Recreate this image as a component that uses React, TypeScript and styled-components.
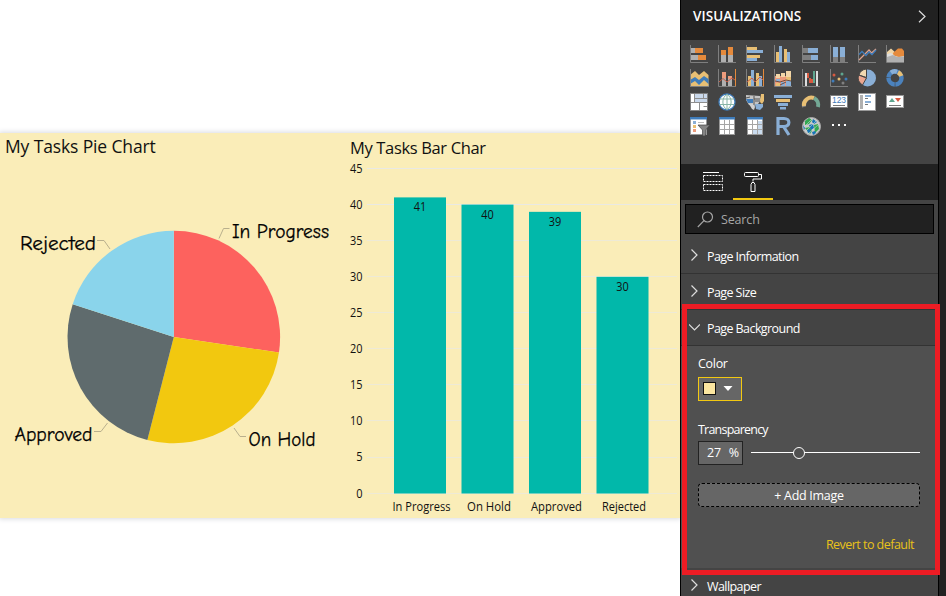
import React from "react";
import styled, { createGlobalStyle } from "styled-components";

const SANS = '"Open Sans", "Noto Sans", sans-serif';
const COMIC = '"Comic Sans MS", "Comic Neue", "Noto Sans", sans-serif';

const GlobalStyle = createGlobalStyle`
  *, *::before, *::after { box-sizing: border-box; }
  body { margin: 0; background: #fff; overflow: hidden; font-family: ${SANS}; }
  svg { display: block; }
`;

const Desktop = styled.div`
  display: flex;
  width: 946px;
  height: 596px;
  background: #212121;
`;

const Canvas = styled.main`
  width: 680px;
  flex: none;
  padding-top: 133px;
  background: #fff;
  overflow: hidden;
`;

const ReportPage = styled.section`
  display: grid;
  grid-template-columns: 345px 335px;
  height: 385px;
  background: #faedb8;
  box-shadow: 0 0 5px 1px #d9dbe0;
`;

const Visual = styled.article<{ $top: number }>`
  display: flex;
  flex-direction: column;
  padding-top: ${(p) => p.$top}px;
`;

const VisualTitle = styled.h2<{ $size: number; $spacing: number }>`
  margin: 0;
  padding-left: 5px;
  height: 27px;
  font-size: ${(p) => p.$size}px;
  line-height: 27px;
  font-weight: 400;
  letter-spacing: ${(p) => p.$spacing}px;
  color: #111;
  white-space: nowrap;
`;

const ComicLabel = styled.text`
  font-family: ${COMIC};
  font-size: 20px;
  fill: #000;
  stroke: #000;
  stroke-width: 0.25px;
`;

const AxisLabel = styled.text`
  font-family: ${SANS};
  font-size: 12.3px;
  fill: #111;
`;

const Panel = styled.aside`
  position: relative;
  display: flex;
  flex-direction: column;
  width: 259px;
  flex: none;
  border: solid #000;
  border-width: 0 1px;
  background: #444;
  color: #fff;
`;

const PanelHeader = styled.header`
  display: flex;
  align-items: center;
  justify-content: space-between;
  flex: none;
  height: 40px;
  padding: 0 12px 8px 12px;
  background: #212121;
`;

const PanelTitle = styled.h1`
  margin: 0;
  font-size: 13.5px;
  font-weight: 600;
  letter-spacing: 0.06px;
`;

const Gallery = styled.div`
  display: grid;
  grid-template-columns: repeat(8, 18px);
  grid-auto-rows: 18px;
  gap: 6px 10px;
  flex: none;
  height: 124px;
  padding: 5px 0 0 9px;
`;

const Tabs = styled.nav`
  display: flex;
  flex: none;
  height: 36px;
  padding-left: 12px;
  background: #212121;
`;

const Tab = styled.button<{ $active?: boolean }>`
  display: flex;
  align-items: flex-start;
  width: 40px;
  height: 36px;
  padding: 7px 0 0 10px;
  border: 0;
  border-bottom: 2px solid ${(p) => (p.$active ? "#f2c811" : "transparent")};
  background: none;
`;

const SearchBox = styled.div`
  display: flex;
  align-items: center;
  gap: 7px;
  flex: none;
  height: 30px;
  margin: 4px;
  padding-left: 11px;
  border: 1px solid #000;
  background: #212121;
  color: #a6a6a6;
  font-size: 12.5px;
  letter-spacing: -0.15px;
`;

const Row = styled.div`
  display: flex;
  align-items: center;
  gap: 7px;
  flex: none;
  height: 36px;
  padding: 0 0 0 8px;
  border-bottom: 1px solid #333;
  font-size: 12.5px;
  font-weight: 500;
  letter-spacing: -0.58px;

  svg {
    margin-bottom: 2px;
  }

  span {
    padding-top: 2px;
  }
`;

const Section = styled.div`
  display: flex;
  flex-direction: column;
  flex: none;
  height: 222px;
  padding: 10px 18px 0 17px;
  background: #505050;
  font-size: 12.5px;
`;

const Label = styled.label<{ $spacing?: number }>`
  height: 16px;
  line-height: 16px;
  letter-spacing: ${(p) => p.$spacing ?? 0}px;
`;

const ColorButton = styled.button`
  display: flex;
  align-items: center;
  gap: 7px;
  flex: none;
  width: 44px;
  height: 24px;
  margin: 5px 0 21px;
  padding: 0 4px 1px;
  border: 1px solid #f2c811;
  background: #666;
`;

const Swatch = styled.span`
  width: 13px;
  height: 13px;
  border: 1px solid #111;
  background: #fbe6a0;
`;

const SliderRow = styled.div`
  display: flex;
  align-items: center;
  gap: 8px;
  height: 24px;
  margin: 3px 0 18px;
`;

const PercentBox = styled.div`
  display: flex;
  justify-content: space-between;
  align-items: center;
  width: 45px;
  height: 24px;
  padding: 0 3px 1px 8px;
  border: 1px solid #222;
  background: #666;
  letter-spacing: -0.2px;
`;

const Track = styled.div`
  display: flex;
  align-items: center;
  width: 169px;
  height: 12px;
  padding-left: 42px;
  background: linear-gradient(#fff, #fff) 0 5px / 100% 1px no-repeat;
`;

const Knob = styled.span`
  width: 12px;
  height: 12px;
  border: 1px solid #fff;
  border-radius: 50%;
  background: #505050;
`;

const AddImage = styled.button`
  height: 24px;
  padding: 1px 0 0;
  border: 1px dashed #000;
  border-radius: 4px;
  background: #666;
  color: #fff;
  font: 12.5px ${SANS};
  letter-spacing: -0.3px;
`;

const Revert = styled.a`
  align-self: flex-end;
  margin: 29px 6px 0 0;
  line-height: 18px;
  letter-spacing: -0.53px;
  color: #e8c21a;
`;

const Highlight = styled.div`
  position: absolute;
  left: 1px;
  top: 304px;
  width: 258px;
  height: 271px;
  border: 5px solid #ed1c24;
  pointer-events: none;
`;

const O = "#e58a3c";
const B = "#8aafd6";
const D = "#3f7cba";
const T = "#e8bf74";
const G = "#b0b0b0";
const K = "#7f7f7f";
const P = "#ec9b7c";
const CREAM = "#f2d6a8";

type Block = [number, number, number, number, string];

function Blocks({ items, axis = true }: { items: Block[]; axis?: boolean }) {
  return (
    <>
      {axis && <path d="M.5 0V17.500H18" fill="none" stroke={K} />}
      {items.map(([x, y, w, h, c], i) => (
        <rect key={i} x={x} y={y} width={w} height={h} fill={c} />
      ))}
    </>
  );
}

const gridIcon = (tinted: boolean) => (
  <>
    <rect x="1.500" y=".5" width="15" height="17" fill="#fff" stroke="#999" />
    {tinted && <path d="M11 4h5v13h-5zM6 13h10v4H6z" fill="#c9dbee" />}
    <path d="M1 0h16v2.500H1z" fill={D} />
    <path d="M2 7.500h14M2 12.500h14M6.500 3v14M11.500 3v14" stroke="#a5a5a5" fill="none" />
  </>
);

const VISUALS: React.ReactNode[] = [
  <Blocks items={[[1, 3, 4, 5, G], [5, 3, 8, 5, O], [1, 10, 7, 5, G], [8, 10, 8, 5, O]]} />,
  <Blocks items={[[3, 5, 5, 5, O], [3, 10, 5, 7, G], [10, 2, 5, 8, O], [10, 10, 5, 7, G]]} />,
  <Blocks items={[[1, 2, 10, 3, T], [1, 5, 16, 3, B], [1, 10, 13, 3, T], [1, 13, 10, 3, B]]} />,
  <Blocks items={[[2, 7, 3, 10, T], [5, 1, 3, 16, B], [10, 4, 3, 13, T], [13, 7, 3, 10, B]]} />,
  <Blocks items={[[1, 3, 5, 5, K], [6, 3, 10, 5, B], [1, 10, 8, 5, K], [9, 10, 7, 5, B]]} />,
  <Blocks items={[[3, 2, 5, 10, B], [3, 12, 5, 5, K], [10, 2, 5, 10, B], [10, 12, 5, 5, K]]} />,
  <>
    <Blocks items={[]} />
    <path d="M1 15L5.500 10.500 11 5 13.500 8 18 4" fill="none" stroke="#e0a48f" strokeWidth="1.300" />
    <path d="M1 9.500L4 6.500 8 10.500 11 7 14 9.500 18 5" fill="none" stroke={D} strokeWidth="1.300" />
  </>,
  <>
    <path d="M1 7L5 3.500 11 9V14H1z" fill="#f0d4a4" />
    <path d="M7 8L12 3.500H16L18 6V13H8z" fill={O} />
    <path d="M1 9L5 8 9 11 13 12 18 11V17H1z" fill="#ddd" />
    <path d="M1 12L7 10 11 12 18 11.500V17H1z" fill={G} />
    <Blocks items={[]} />
  </>,
  <>
    <path d="M0 6L5 2 9 6 14 2 18.500 6V17H0z" fill={T} />
    <path d="M0 11L5 8 9 11 14 7 18.500 10V17H0z" fill={D} />
    <path d="M0 15L5 12 9 16 14 11 18.500 15V18H0z" fill={T} />
    <path d="M0 17.500h19M.5 0v18" stroke={K} />
  </>,
  <>
    <Blocks items={[[4, 3, 4, 6, P], [4, 9, 4, 8, G], [10, 7, 4, 3, P], [10, 10, 4, 7, G], [17, 0, 1, 17, O]]} />
    <path d="M1 13L5 9.500 9 13 14 9 17 11" fill="none" stroke="#c95d46" />
  </>,
  <>
    <Blocks items={[[2, 7, 3, 10, T], [5, 1, 3, 16, B], [10, 4, 3, 13, T], [13, 7, 3, 10, B], [17, 0, 1, 17, O]]} />
    <path d="M1 13L6 9 9 13 14 8 17 11" fill="none" stroke="#c95d46" />
  </>,
  <>
    <Blocks items={[[1, 7, 11, 4, P], [1, 11, 16, 6, P], [2, 5, 4, 4, CREAM], [7, 4, 4, 4, CREAM], [12, 2, 5, 6, CREAM], [2, 10, 4, 3, B], [7, 8, 4, 4, P], [12, 8, 5, 4, T], [2, 14, 4, 3, T], [7, 13, 4, 4, B], [12, 12, 5, 5, B]]} />
    <path d="M1 12l5 1 6-2 5 1M6 16l6-3" stroke="#6d4b43" fill="none" />
  </>,
  <Blocks items={[[3, 4, 2, 13, "#ddd"], [5, 4, 2, 5, "#d95a40"], [7, 9, 2, 5, "#d95a40"], [9, 10, 2, 4, "#d95a40"], [11, 2, 2, 12, "#5ea58e"], [14, 2, 2, 15, "#ddd"]]} />,
  <>
    <Blocks items={[]} />
    {[[4, 6, "#d95a40"], [12, 5, "#5ea58e"], [3, 12, D], [9, 10, T], [16, 10, D], [13, 14, K]].map(([x, y, c], i) => (
      <circle key={i} cx={x as number} cy={y as number} r="1.500" fill={c as string} />
    ))}
  </>,
  <>
    <circle cx="9.500" cy="9" r="8.500" fill={B} />
    <path d="M8.500 8.500V0A8.500 8.500 0 0 0 1 6z" fill="#f2d9b1" stroke="#444" />
    <path d="M8.500 9L.5 6A9 9 0 0 0 4.500 16z" fill="#eba68f" stroke="#444" />
  </>,
  <g fill="none" strokeWidth="4.500">
    <circle cx="9" cy="9" r="6.500" stroke="#4b82bd" strokeDasharray="9.600 .6" />
    <path d="M5 3.600A6.500 6.500 0 0 1 11 2.800" stroke={B} />
    <path d="M12 3.200A6.500 6.500 0 0 1 15.200 7" stroke={T} />
  </g>,
  <>
    <rect x=".5" y=".5" width="17" height="17" fill="#fff" stroke={K} />
    <path d="M5 1h12v9H5z" fill="#c9d8eb" />
    <path d="M4.500 1v8M1 9.500h16M9.500 10v7M5 5.500h12M13.500 1v4M13.500 13.500h3.500" fill="none" stroke="#8e8e8e" />
  </>,
  <>
    <circle cx="9" cy="9" r="8" fill="#fff" stroke={D} strokeWidth="1.300" />
    <path d="M2 6h14M1.500 11.500h15M9 1.500v15M9 1.500C3.500 4 3.500 14 9 16.500M9 1.500c5.500 2.500 5.500 12.500 0 15" fill="none" stroke="#87b4a6" />
  </>,
  <>
    <path d="M0 2l14 1 1 4-3 4-5 2-4-1-3-5z" fill="#c4c4c4" />
    <path d="M0 6h7v4H2z" fill={D} />
    <path d="M15 1h3v7l-2 3-2-2z" fill={T} />
    <path d="M3 11h5l1 3-1 3-2-1z" fill="#d0d0d0" />
    <path d="M9 11h8v3l-3 3-4-1z" fill={B} />
    <path d="M8 3v3h6M8 6v6M0 5l4-1M14 8H9" stroke="#555" fill="none" />
  </>,
  <Blocks axis={false} items={[[0, 2, 18, 3, B], [2, 6, 14, 3, T], [4, 10, 10, 3, B], [6, 14, 6, 2.500, B]]} />,
  <g fill="none" strokeWidth="4">
    <path d="M2 14A7.500 7.500 0 0 1 4 7" stroke={K} />
    <path d="M2 13A7.500 7.500 0 0 1 12 5" stroke={T} />
    <path d="M12 5A8 8 0 0 1 16 14" stroke="#73a895" />
  </g>,
  <>
    <rect x=".5" y="2.500" width="17" height="12" fill="#fff" stroke={K} />
    <text x="9" y="10" textAnchor="middle" fontSize="8.500" fontFamily="Liberation Sans" fill={D} textLength="14">123</text>
    <path d="M3 12.500h12" stroke="#777" />
  </>,
  <>
    <rect x=".5" y=".5" width="17" height="17" fill="#fff" stroke="#999" />
    <path d="M2 2h3v14H2z" fill={G} />
    <path d="M7 2h6v2H7zM7 8h6v2H7z" fill={B} />
    <path d="M7 5.500h3M7 11.500h3" stroke="#777" />
  </>,
  <>
    <rect x=".5" y="2.500" width="17" height="12" fill="#fff" stroke="#999" />
    <path d="M3 9l3-4 3 4z" fill="#5ea58e" />
    <path d="M9 5h6l-3 4z" fill="#d95a40" />
    <path d="M3 12.500h12" stroke="#777" />
  </>,
  <>
    <rect x=".5" y=".5" width="16" height="17" fill="#fff" stroke="#999" />
    <path d="M0 0h17v2.500H0z" fill={D} />
    <path d="M3 4h3v3H3z" fill={B} />
    <path d="M3 8h3v3H3z" fill={T} />
    <path d="M3 12h3v3H3z" fill={P} />
    <path d="M8 5.500h6" stroke="#bbb" />
    <path d="M8 8H20l-4.500 5v6h-3v-6z" fill="#858585" stroke="#444" strokeWidth=".7" />
  </>,
  gridIcon(false),
  gridIcon(true),
  <path d="M4 18V1.500H10C16.500 1.500 16.500 9.500 10 9.500H5M9.500 9.500L15 18" fill="none" stroke={B} strokeWidth="3.200" />,
  <>
    <circle cx="9.500" cy="9.500" r="9" fill="#c9c9c9" stroke="#aaa" />
    <path d="M3 4l4-3 3 2-3 4-4 1zM3 11l5-1 2 4-2 3zM12 8l4-1 1 5-4 4z" fill="#32a852" />
    <path d="M11 2l4 3-3 2-2-2zM7 8l4-1 1 4-3 2zM1 8l2 3-1 2zM10 15l3-1 1 2-3 2zM5 13l3-1 1 3-3 1z" fill="#1675b8" />
    <path d="M3 15L15 3M6 17L17 7M2 10L10 2" stroke="#c7d9d5" strokeWidth=".6" fill="none" />
  </>,
  <path d="M2 7h2v2H2zM8 7h2v2H8zM14 7h2v2h-2z" fill="#fff" />,
];

const TASKS = [
  { name: "In Progress", value: 41, color: "#fd625e" },
  { name: "On Hold", value: 40, color: "#f2c80f" },
  { name: "Approved", value: 39, color: "#5f6b6d" },
  { name: "Rejected", value: 30, color: "#8ad4eb" },
];

function PieChart() {
  const total = TASKS.reduce((s, t) => s + t.value, 0);
  const cx = 173.8, cy = 177, r = 106.3;
  let sum = 0;
  const at = (v: number) => {
    const a = (v / total) * Math.PI * 2;
    return `${cx + r * Math.sin(a)} ${cy - r * Math.cos(a)}`;
  };
  return (
    <svg width="345" height="358" viewBox="0 0 345 358">
      {TASKS.map((t) => {
        const start = sum;
        sum += t.value;
        return <path key={t.name} d={`M${cx} ${cy}L${at(start)}A${r} ${r} 0 0 1 ${at(sum)}z`} fill={t.color} />;
      })}
      <g fill="none" stroke="#b9b08d">
        <path d="M219 78.500l4.500-10h6M97 80.500h7l6 8.500M94 271.500h7l6.500-8.500M234 268l6 8.500h6" />
      </g>
      <ComicLabel x="232" y="78" textLength="97" lengthAdjust="spacingAndGlyphs">In Progress</ComicLabel>
      <ComicLabel x="20" y="90" textLength="76" lengthAdjust="spacingAndGlyphs">Rejected</ComicLabel>
      <ComicLabel x="14.500" y="281" textLength="78" lengthAdjust="spacingAndGlyphs">Approved</ComicLabel>
      <ComicLabel x="248.500" y="286" textLength="67" lengthAdjust="spacingAndGlyphs">On Hold</ComicLabel>
    </svg>
  );
}

const LABEL_WIDTHS = [58, 44, 51, 44];

function BarChart() {
  const base = 332.5;
  const unit = 7.222;
  return (
    <svg width="335" height="357" viewBox="0 0 335 357">
      {Array.from({ length: 10 }, (_, i) => i * 5).map((v) => {
        const y = base - v * unit;
        return (
          <g key={v}>
            <path d={`M22 ${Math.floor(y - 0.3) + 0.5}H332`} stroke="#e9e9e4" opacity={v >= 40 ? 1 : 0.7} />
            <AxisLabel x="17.500" y={y + 4} textAnchor="end" textLength={v > 5 ? 12.5 : 6.3} lengthAdjust="spacingAndGlyphs">{v}</AxisLabel>
          </g>
        );
      })}
      {TASKS.map((t, i) => {
        const x = 49 + i * 67.5;
        const h = t.value * unit;
        return (
          <g key={t.name}>
            <rect x={x} y={base - h} width="52" height={h} fill="#01b8aa" />
            <AxisLabel x={x + 26} y={base - h + 14} textAnchor="middle" textLength="12.500" lengthAdjust="spacingAndGlyphs">{t.value}</AxisLabel>
            <AxisLabel x={x + 27.5} y="350" textAnchor="middle" textLength={LABEL_WIDTHS[i]} lengthAdjust="spacingAndGlyphs">{t.name}</AxisLabel>
          </g>
        );
      })}
    </svg>
  );
}

function Chevron({ down }: { down?: boolean }) {
  return (
    <svg width="11" height="14" viewBox="0 0 11 14" fill="none" stroke="#ddd" strokeWidth="1.200">
      <path d={down ? "M0 4.500l5.500 5.500L11 4.500" : "M2.500 1.500L8 7 2.500 12.500"} />
    </svg>
  );
}

export default function App() {
  return (
    <>
      <GlobalStyle />
      <Desktop>
        <Canvas>
          <ReportPage>
            <Visual $top={0}>
              <VisualTitle $size={17.5} $spacing={-0.13}>My Tasks Pie Chart</VisualTitle>
              <PieChart />
            </Visual>
            <Visual $top={1}>
              <VisualTitle $size={16.5} $spacing={-0.35}>My Tasks Bar Char</VisualTitle>
              <BarChart />
            </Visual>
          </ReportPage>
        </Canvas>
        <Panel>
          <PanelHeader>
            <PanelTitle>VISUALIZATIONS</PanelTitle>
            <svg width="8" height="13" viewBox="0 0 8 13" fill="none" stroke="#ddd" strokeWidth="1.200"><path d="M1 .8l6 5.700-6 5.700" /></svg>
          </PanelHeader>
          <Gallery>
            {VISUALS.map((icon, i) => (
              <svg key={i} width="18" height="18" viewBox="0 0 18 18" overflow="visible">{icon}</svg>
            ))}
          </Gallery>
          <Tabs>
            <Tab aria-label="Fields">
              <svg width="20" height="20" viewBox="0 0 20 20" fill="none" stroke="#fff">
                <path d="M0 1.500h16" />
                <path d="M.5 4.500h19v6H.5zM.5 13.500h19v6H.5z" strokeDasharray="2 1" />
              </svg>
            </Tab>
            <Tab $active aria-label="Format">
              <svg width="20" height="21" viewBox="0 0 20 21" fill="none" stroke="#fff">
                <rect x="1.500" y="1.500" width="14" height="4" rx="1" />
                <path d="M16 3.500h2.500v4.500H10v2.500" />
                <path d="M9 11.500h2l1 2v7H8v-7z" />
              </svg>
            </Tab>
          </Tabs>
          <SearchBox>
            <svg width="17" height="17" viewBox="0 0 17 17" fill="none" stroke="#a6a6a6" strokeWidth="1.200">
              <circle cx="10.500" cy="6" r="5" />
              <path d="M7 9.700L.8 16" />
            </svg>
            Search
          </SearchBox>
          <Row><Chevron /><span>Page Information</span></Row>
          <Row><Chevron /><span>Page Size</span></Row>
          <Row><Chevron down /><span>Page Background</span></Row>
          <Section>
            <Label $spacing={-0.3}>Color</Label>
            <ColorButton>
              <Swatch />
              <svg width="10" height="5" viewBox="0 0 10 5"><path d="M.5 0h9L5 5z" fill="#fff" /></svg>
            </ColorButton>
            <Label $spacing={-0.78}>Transparency</Label>
            <SliderRow>
              <PercentBox><span>27</span><span>%</span></PercentBox>
              <Track><Knob /></Track>
            </SliderRow>
            <AddImage>+ Add Image</AddImage>
            <Revert>Revert to default</Revert>
          </Section>
          <Row><Chevron /><span>Wallpaper</span></Row>
          <Highlight />
        </Panel>
      </Desktop>
    </>
  );
}
